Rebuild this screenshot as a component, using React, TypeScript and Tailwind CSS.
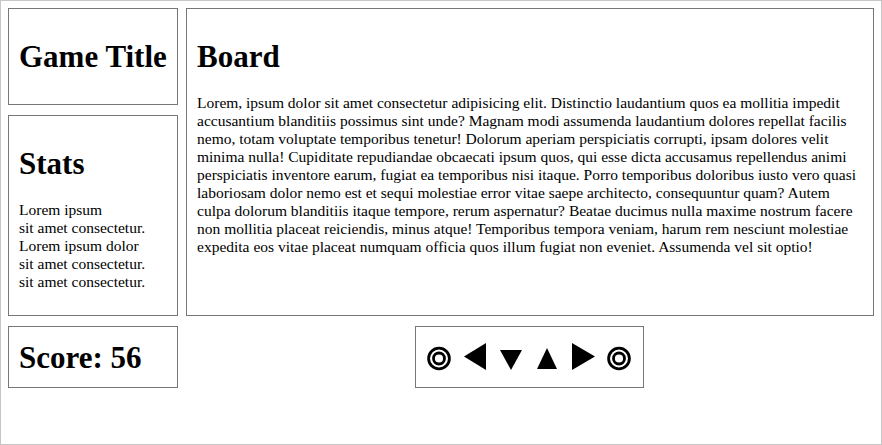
import React from 'react';

const boardText =
  'Lorem, ipsum dolor sit amet consectetur adipisicing elit. Distinctio laudantium quos ea mollitia impedit accusantium blanditiis possimus sint unde? Magnam modi assumenda laudantium dolores repellat facilis nemo, totam voluptate temporibus tenetur! Dolorum aperiam perspiciatis corrupti, ipsam dolores velit minima nulla! Cupiditate repudiandae obcaecati ipsum quos, qui esse dicta accusamus repellendus animi perspiciatis inventore earum, fugiat ea temporibus nisi itaque. Porro temporibus doloribus iusto vero quasi laboriosam dolor nemo est et sequi molestiae error vitae saepe architecto, consequuntur quam? Autem culpa dolorum blanditiis itaque tempore, rerum aspernatur? Beatae ducimus nulla maxime nostrum facere non mollitia placeat reiciendis, minus atque! Temporibus tempora veniam, harum rem nesciunt molestiae expedita eos vitae placeat numquam officia quos illum fugiat non eveniet. Assumenda vel sit optio!';

type Ctrl = 'target' | 'left' | 'down' | 'up' | 'right';

function ControlIcon({ kind }: { kind: Ctrl }) {
  return (
    <svg width="36" height="28" viewBox="0 0 36 28" className="block">
      {kind === 'target' && (
        <g fill="none" stroke="#000">
          <circle cx="18" cy="15.5" r="10.4" strokeWidth="2.8" />
          <circle cx="18" cy="15.5" r="5.5" strokeWidth="2.8" />
        </g>
      )}
      {kind === 'left' && <polygon points="29,0 29,27 7,13.5" fill="#000" />}
      {kind === 'right' && <polygon points="7,0 7,27 30,13.5" fill="#000" />}
      {kind === 'down' && <polygon points="7,7 29,7 18,27" fill="#000" />}
      {kind === 'up' && <polygon points="8,26 28,26 18,5" fill="#000" />}
    </svg>
  );
}

export default function App() {
  const controls: Ctrl[] = ['target', 'left', 'down', 'up', 'right', 'target'];

  return (
    <div className="w-[882px] h-[445px] border border-[#c6c6c6] p-[7px] bg-white text-black font-['Liberation_Serif',serif]">
      <div className="grid grid-cols-[170px_1fr] grid-rows-[97px_201px_62px] gap-x-2 gap-y-[10px]">
        <div className="border border-[#777] p-[10px]">
          <h1 className="text-[31px] leading-[35px] font-bold my-5">Game Title</h1>
        </div>

        <div className="row-span-2 border border-[#777] p-[10px]">
          <h1 className="text-[31px] leading-[35px] font-bold my-5">Board</h1>
          <p className="text-[15.5px] leading-[18px]">{boardText}</p>
        </div>

        <div className="border border-[#777] p-[10px]">
          <h1 className="text-[31px] leading-[35px] font-bold my-5">Stats</h1>
          <p className="text-[15.5px] leading-[18px]">
            Lorem ipsum
            <br />
            sit amet consectetur.
            <br />
            Lorem ipsum dolor
            <br />
            sit amet consectetur.
            <br />
            sit amet consectetur.
          </p>
        </div>

        <div className="border border-[#777] px-[10px] flex items-center">
          <h1 className="text-[31px] leading-[35px] font-bold">Score: 56</h1>
        </div>

        <div className="justify-self-center w-[229px] -translate-x-px border border-[#777] flex justify-center items-start pt-4">
          {controls.map((c, i) => (
            <ControlIcon key={i} kind={c} />
          ))}
        </div>
      </div>
    </div>
  );
}
